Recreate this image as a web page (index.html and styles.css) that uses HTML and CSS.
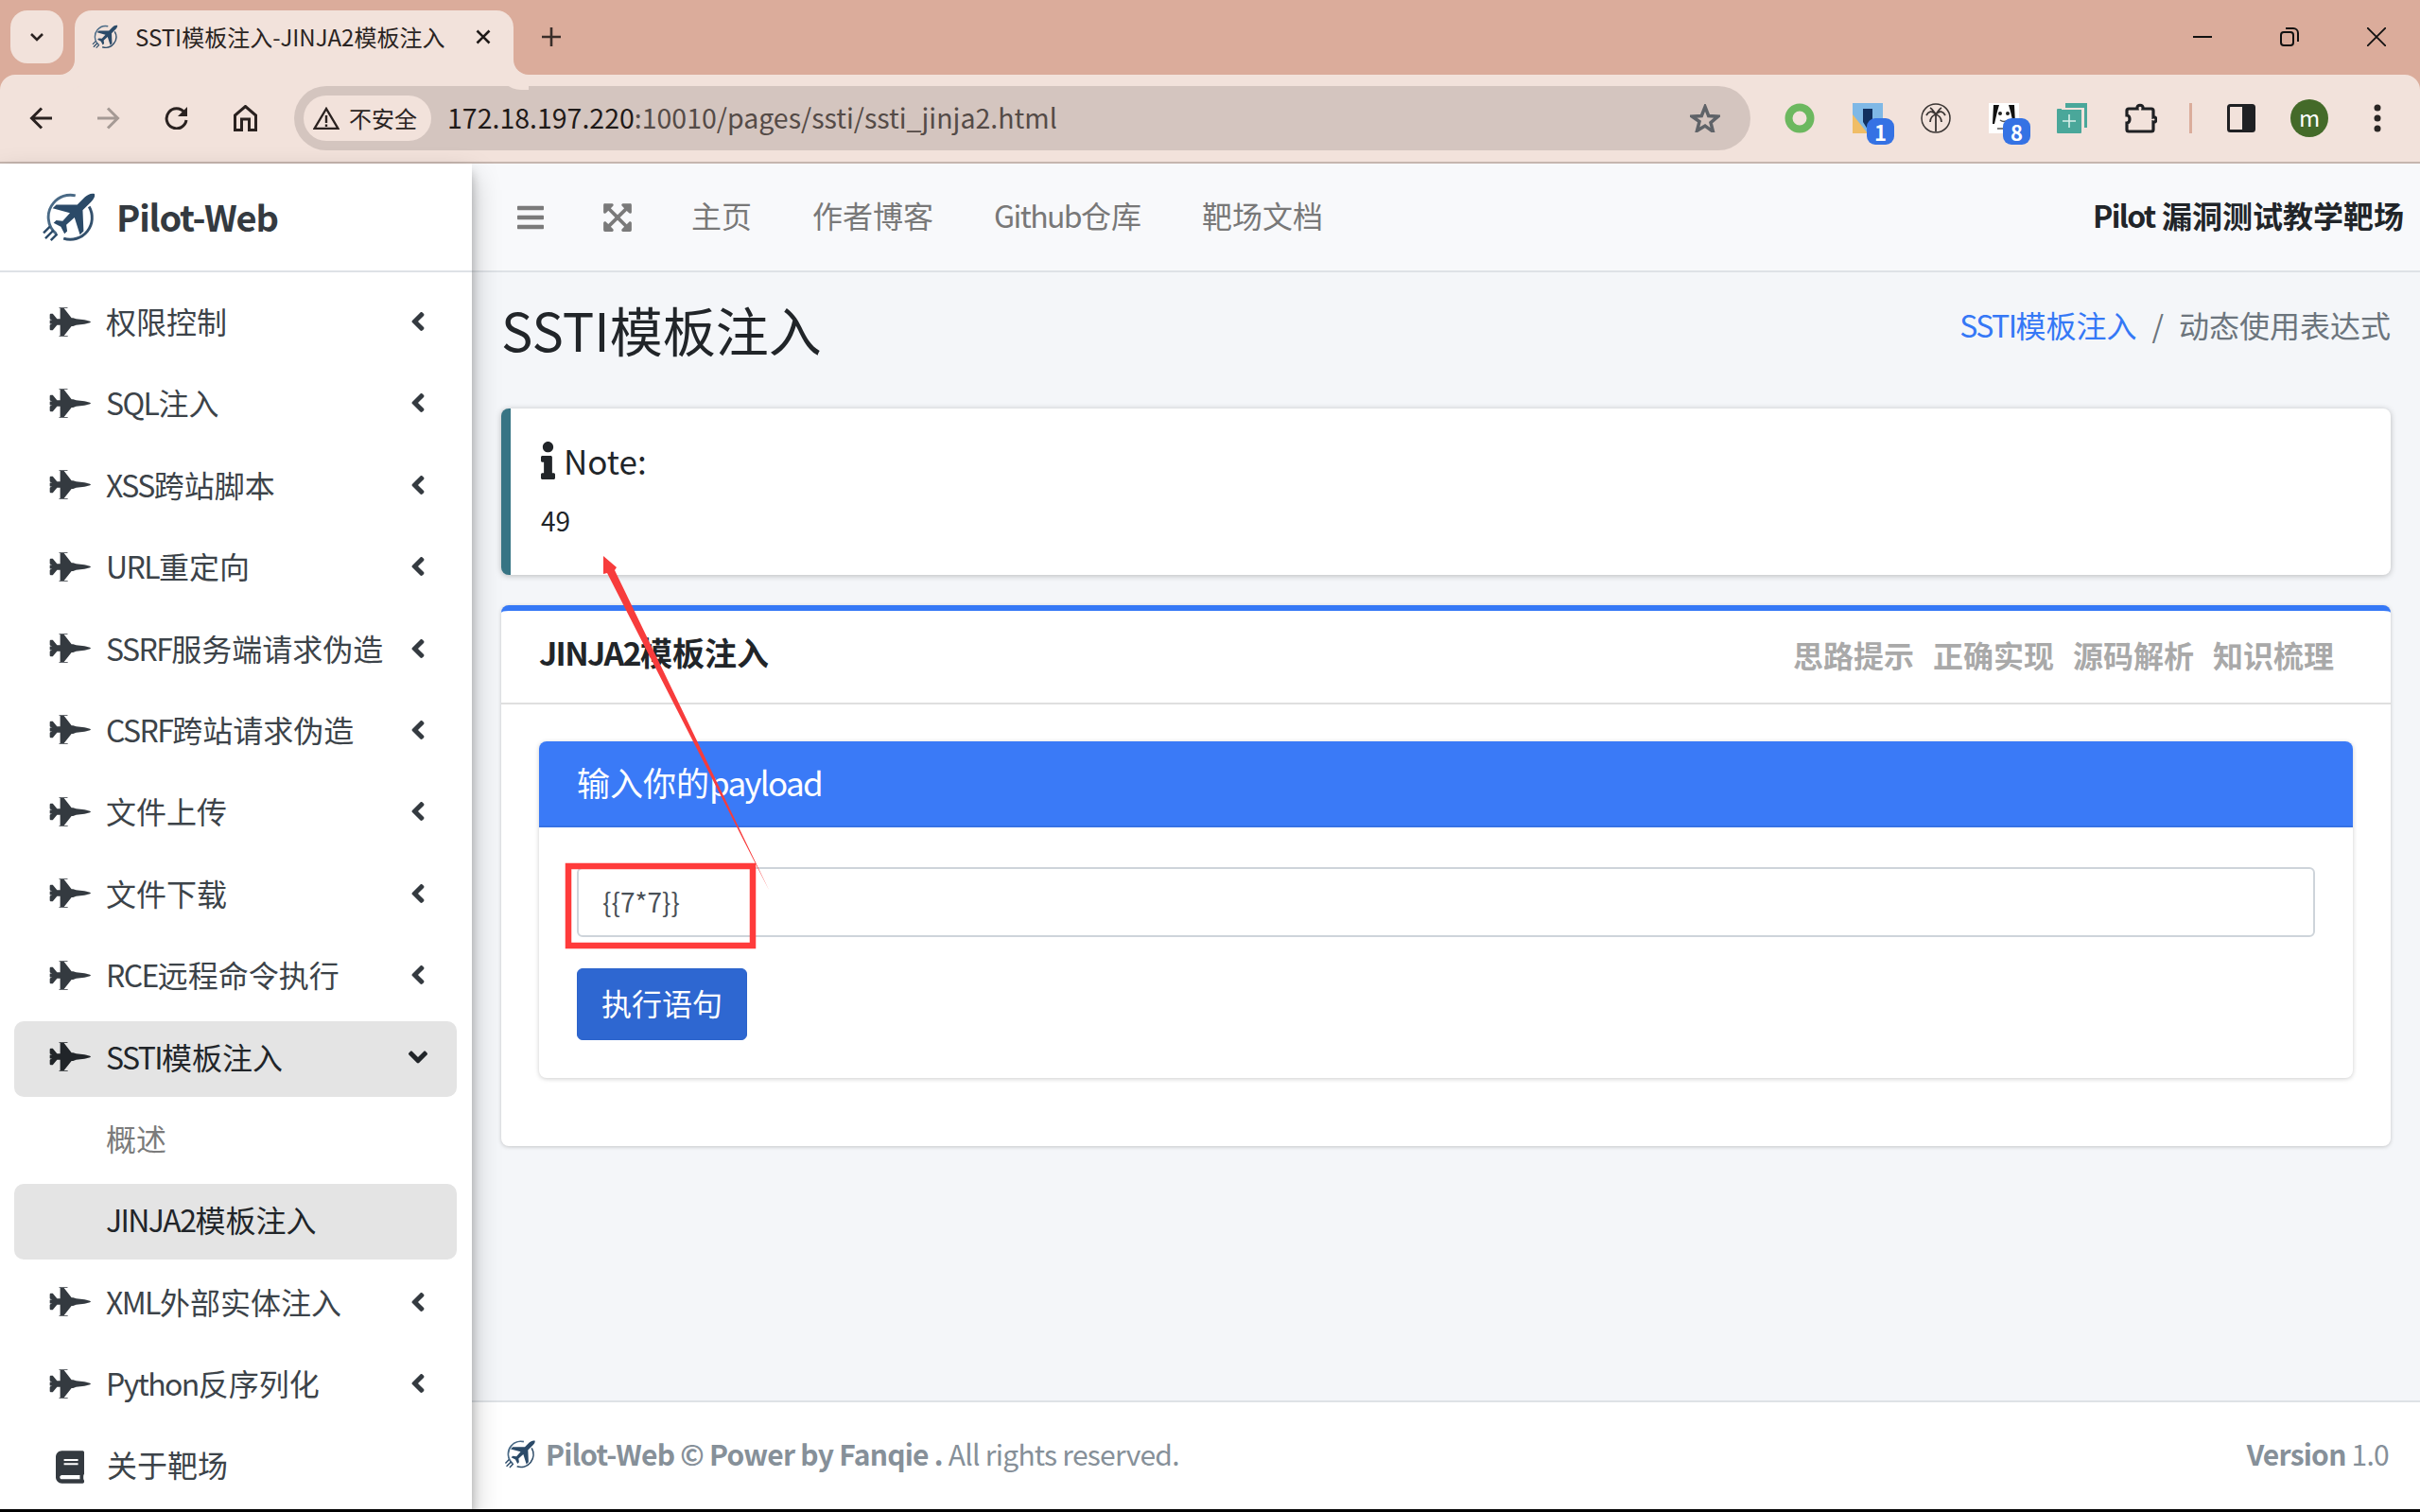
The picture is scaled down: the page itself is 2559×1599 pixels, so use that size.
FILE: index.html
```html
<!DOCTYPE html>
<html lang="zh-CN">
<head>
  <meta charset="utf-8">
  <title>SSTI模板注入-JINJA2模板注入</title>
  <link rel="stylesheet" href="styles.css">
</head>
<body>
  <svg class="sprites" xmlns="http://www.w3.org/2000/svg">
    <symbol id="jet" viewBox="0 0 640 512"><path d="M544 224l-128-16-48-16h-24L227.158 44h39.509C278.333 44 288 41.375 288 38s-9.667-6-21.333-6H152v12h16v164h-48l-66.667-80H18.667L8 138.667V208h8v16h24v2.666l-32 5.334v48l32 5.334V288H16v16H8v69.333L18.667 384h34.667L120 304h48v164h-16v12h114.667c11.667 0 21.333-2.625 21.333-6s-9.667-6-21.333-6h-39.509L344 320h24l48-16 128-16c96-21.333 96-26.583 96-32 0-5.417 0-10.667-96-32z"/></symbol>
    <symbol id="angle" viewBox="0 0 256 512"><path d="M31.7 239l136-136c9.4-9.4 24.6-9.4 33.9 0l22.6 22.6c9.4 9.4 9.4 24.6 0 33.9L127.9 256l96.4 96.4c9.4 9.4 9.4 24.6 0 33.9L201.7 409c-9.4 9.4-24.6 9.4-33.9 0l-136-136c-9.5-9.4-9.5-24.6-.1-34z"/></symbol>
    <symbol id="logo" viewBox="0 0 60 54">
      <path d="M16 45A24 24 0 0 1 13 11 24 24 0 0 1 37 3" fill="none" stroke="#4a6a86" stroke-width="3"/>
      <path d="M52 15A24 24 0 0 1 24 50" fill="none" stroke="#33506c" stroke-width="3"/>
      <path d="M58 1C54 0 50 2 47 5L39 13 16 13 12 17 31 22 23 31 16 30 13 33 21 37 25 45 28 42 27 35 36 27 42 46 46 42 45 19 54 10C57 7 59 4 58 1Z" fill="#2b4a68"/>
      <path d="M9 37L2 44M13 41L4 50M17 45L10 52" fill="none" stroke="#2b4a68" stroke-width="2.5"/>
    </symbol>
  </svg>

  <div class="tabstrip">
    <div class="tab-list">
      <svg width="16" height="11" viewBox="0 0 16 11"><path d="M2 2l6 6 6-6" fill="none" stroke="#2a2220" stroke-width="2.6"/></svg>
    </div>
    <div class="tab">
      <svg class="tab-icon"><use href="#logo"/></svg>
      <span class="tab-title">SSTI模板注入-JINJA2模板注入</span>
      <svg class="tab-close" width="16" height="16" viewBox="0 0 16 16"><path d="M1.5 1.5l13 13M14.5 1.5l-13 13" stroke="#1f1a18" stroke-width="2.6"/></svg>
    </div>
    <svg class="new-tab" width="20" height="20" viewBox="0 0 20 20"><path d="M10 0v20M0 10h20" stroke="#3a2e2a" stroke-width="2.6"/></svg>
    <div class="win-controls">
      <svg width="20" height="20" viewBox="0 0 20 20"><path d="M0 10h20" stroke="#111" stroke-width="2"/></svg>
      <svg width="20" height="20" viewBox="0 0 20 20"><rect x="1" y="5" width="13" height="14" rx="3" fill="none" stroke="#111" stroke-width="2"/><path d="M6 1h8a5 5 0 0 1 5 5v9" fill="none" stroke="#111" stroke-width="2"/></svg>
      <svg width="20" height="20" viewBox="0 0 20 20"><path d="M0 0l20 20M20 0L0 20" stroke="#111" stroke-width="1.8"/></svg>
    </div>
  </div>

  <div class="toolbar">
    <div class="nav-btns">
      <svg width="24" height="24" viewBox="0 0 24 24"><path d="M24 12H3M13 1.500L2.500 12 13 22.500" fill="none" stroke="#2a2220" stroke-width="3"/></svg>
      <svg width="24" height="24" viewBox="0 0 24 24"><path d="M0 12h21M11 1.500L21.500 12 11 22.500" fill="none" stroke="#a59a95" stroke-width="3"/></svg>
      <svg width="25" height="24" viewBox="0 0 25 24"><path d="M21 6A10.500 10.500 0 1 0 23 14" fill="none" stroke="#2a2220" stroke-width="3"/><path d="M24 0v10H14z" fill="#2a2220"/></svg>
      <svg width="25" height="28" viewBox="0 0 25 28"><path d="M1.500 26.500V11L12.500 1.500 23.500 11v15.500h-7V15h-8v11.500z" fill="none" stroke="#2a2220" stroke-width="3"/></svg>
    </div>
    <div class="omnibox">
      <div class="chip">
        <svg width="28" height="24" viewBox="0 0 28 24"><path d="M14 2L1.500 23h25z" fill="none" stroke="#2a2220" stroke-width="2.400"/><path d="M14 9v8M14 18.500v2.500" stroke="#2a2220" stroke-width="2.400"/></svg>
        <span>不安全</span>
      </div>
      <div class="url"><span class="url-host">172.18.197.220</span>:10010/pages/ssti/ssti_jinja2.html</div>
      <svg class="star" width="32" height="30" viewBox="0 0 32 30"><path d="M16 3l3.700 9.500 10 .7-7.700 6.400 2.500 9.700L16 23l-8.500 5.300L10 18.600 2.300 13.200l10-.7z" fill="none" stroke="#5f6368" stroke-width="3.500"/></svg>
    </div>
    <div class="ext-bar">
      <div class="ext"><svg width="32" height="32" viewBox="0 0 32 32"><circle cx="16" cy="16" r="11.500" fill="none" stroke="#6cb85f" stroke-width="8"/></svg></div>
      <div class="ext">
        <svg width="32" height="32" viewBox="0 0 32 32"><rect width="32" height="32" fill="#7fb8e6"/><path d="M0 12l16 20H0z" fill="#f0bd66"/><path d="M11 6h10v22l-5 0-5-8z" fill="#12305f"/></svg>
        <span class="badge">1</span>
      </div>
      <div class="ext"><svg width="32" height="32" viewBox="0 0 32 32"><circle cx="16" cy="16" r="15" fill="none" stroke="#3a3533" stroke-width="1.500"/><path d="M16 30V12M16 12C12 7 8 9 6 13M16 12c4-5 8-3 10 1M16 12C13 8 12 6 10 5M16 12c3-4 4-6 6-7M16 12c-3 1-6 4-6 8M16 12c3 1 6 4 6 8" fill="none" stroke="#3a3533" stroke-width="1.800"/></svg></div>
      <div class="ext">
        <svg width="32" height="32" viewBox="0 0 32 32"><rect width="32" height="32" fill="#fff"/><path d="M5 2h6L9 9 6 22H4zM27 2h-6l2 7 3 13h2z" fill="#111"/><circle cx="12" cy="11" r="2" fill="#222"/><circle cx="20" cy="11" r="2" fill="#222"/><path d="M12 18q4 3 8 0M9 27h14" fill="none" stroke="#555" stroke-width="1.500"/></svg>
        <span class="badge">8</span>
      </div>
      <div class="ext"><svg width="32" height="32" viewBox="0 0 32 32"><path d="M9 0h23v26h-3V5H9z" fill="#4aa79a"/><rect y="6" width="26" height="26" rx="1" fill="#4aa79a"/><path d="M5 5h22v2H5z" fill="#f2e2db"/><path d="M13 12v14M6 19h14" stroke="#d9efe9" stroke-width="1.600"/></svg></div>
      <div class="ext puzzle"><svg width="34" height="32" viewBox="0 0 34 32"><path d="M4 6h9c-1-5 7-5 6 0h9a2 2 0 0 1 2 2v7c4-1 4 6 0 5v8a2 2 0 0 1-2 2H4a2 2 0 0 1-2-2v-7c4 0 4-8 0-8V8a2 2 0 0 1 2-2z" fill="none" stroke="#1f2023" stroke-width="3.200"/></svg></div>
      <div class="ext-sep"></div>
      <div class="ext"><svg width="30" height="30" viewBox="0 0 30 30"><rect x="1.500" y="1.500" width="27" height="27" rx="2" fill="none" stroke="#1f2023" stroke-width="3"/><rect x="16" y="1" width="13" height="28" fill="#1f2023"/></svg></div>
      <div class="avatar">m</div>
      <svg class="menu-dots" width="8" height="30" viewBox="0 0 8 30"><circle cx="4" cy="4" r="3.500" fill="#2a2624"/><circle cx="4" cy="15" r="3.500" fill="#2a2624"/><circle cx="4" cy="26" r="3.500" fill="#2a2624"/></svg>
    </div>
  </div>

  <div class="page">
    <aside class="sidebar">
      <div class="brand">
        <svg class="brand-logo"><use href="#logo"/></svg>
        <span class="brand-name">Pilot-Web</span>
      </div>
      <ul class="side-nav">
        <li class="side-item"><svg class="jet"><use href="#jet"/></svg><div class="side-label">权限控制</div><svg class="angle"><use href="#angle"/></svg></li>
        <li class="side-item"><svg class="jet"><use href="#jet"/></svg><div class="side-label"><span class="en">SQL</span>注入</div><svg class="angle"><use href="#angle"/></svg></li>
        <li class="side-item"><svg class="jet"><use href="#jet"/></svg><div class="side-label"><span class="en">XSS</span>跨站脚本</div><svg class="angle"><use href="#angle"/></svg></li>
        <li class="side-item"><svg class="jet"><use href="#jet"/></svg><div class="side-label"><span class="en">URL</span>重定向</div><svg class="angle"><use href="#angle"/></svg></li>
        <li class="side-item"><svg class="jet"><use href="#jet"/></svg><div class="side-label"><span class="en">SSRF</span>服务端请求伪造</div><svg class="angle"><use href="#angle"/></svg></li>
        <li class="side-item"><svg class="jet"><use href="#jet"/></svg><div class="side-label"><span class="en">CSRF</span>跨站请求伪造</div><svg class="angle"><use href="#angle"/></svg></li>
        <li class="side-item"><svg class="jet"><use href="#jet"/></svg><div class="side-label">文件上传</div><svg class="angle"><use href="#angle"/></svg></li>
        <li class="side-item"><svg class="jet"><use href="#jet"/></svg><div class="side-label">文件下载</div><svg class="angle"><use href="#angle"/></svg></li>
        <li class="side-item"><svg class="jet"><use href="#jet"/></svg><div class="side-label"><span class="en">RCE</span>远程命令执行</div><svg class="angle"><use href="#angle"/></svg></li>
        <li class="side-item open"><svg class="jet"><use href="#jet"/></svg><div class="side-label"><span class="en">SSTI</span>模板注入</div><svg class="angle"><use href="#angle"/></svg></li>
        <li class="side-item sub muted"><div class="side-label">概述</div></li>
        <li class="side-item sub current"><div class="side-label"><span class="en">JINJA2</span>模板注入</div></li>
        <li class="side-item"><svg class="jet"><use href="#jet"/></svg><div class="side-label"><span class="en">XML</span>外部实体注入</div><svg class="angle"><use href="#angle"/></svg></li>
        <li class="side-item"><svg class="jet"><use href="#jet"/></svg><div class="side-label"><span class="en">Python</span>反序列化</div><svg class="angle"><use href="#angle"/></svg></li>
        <li class="side-item"><svg class="book" viewBox="0 0 448 512"><path d="M448 360V24c0-13.300-10.700-24-24-24H96C43 0 0 43 0 96v320c0 53 43 96 96 96h328c13.300 0 24-10.700 24-24v-16c0-7.500-3.500-14.300-8.900-18.700-4.200-15.400-4.200-59.300 0-74.700 5.400-4.300 8.900-11.100 8.900-18.600zM128 134c0-3.300 2.700-6 6-6h212c3.300 0 6 2.700 6 6v20c0 3.300-2.700 6-6 6H134c-3.300 0-6-2.700-6-6v-20zm0 64c0-3.300 2.700-6 6-6h212c3.300 0 6 2.700 6 6v20c0 3.300-2.700 6-6 6H134c-3.300 0-6-2.700-6-6v-20zm253.400 250H96c-17.700 0-32-14.300-32-32 0-17.600 14.400-32 32-32h285.400c-1.900 17.100-1.900 46.900 0 64z"/></svg><div class="side-label">关于靶场</div></li>
      </ul>
    </aside>

    <div class="main">
      <nav class="topbar">
        <svg class="top-icon bars" viewBox="0 0 448 512"><path d="M16 132h416c8.837 0 16-7.163 16-16V76c0-8.837-7.163-16-16-16H16C7.163 60 0 67.163 0 76v40c0 8.837 7.163 16 16 16zm0 160h416c8.837 0 16-7.163 16-16v-40c0-8.837-7.163-16-16-16H16c-8.837 0-16 7.163-16 16v40c0 8.837 7.163 16 16 16zm0 160h416c8.837 0 16-7.163 16-16v-40c0-8.837-7.163-16-16-16H16c-8.837 0-16 7.163-16 16v40c0 8.837 7.163 16 16 16z"/></svg>
        <svg class="top-icon expand" viewBox="0 0 448 512"><path d="M448 344v112a23.940 23.940 0 0 1-24 24H312c-21.390 0-32.090-25.900-17-41l36.200-36.200L224 295.600 116.770 402.900 153 439c15.090 15.100 4.390 41-17 41H24a23.940 23.940 0 0 1-24-24V344c0-21.400 25.890-32.100 41-17l36.190 36.200L184.460 256 77.180 148.700 41 185c-15.100 15.100-41 4.400-41-17V56a23.940 23.940 0 0 1 24-24h112c21.390 0 32.090 25.900 17 41l-36.200 36.200L224 216.400l107.230-107.300L295 73c-15.090-15.100-4.390-41 17-41h112a23.940 23.940 0 0 1 24 24v112c0 21.400-25.890 32.100-41 17l-36.190-36.200L263.540 256l107.280 107.300L407 327.100c15.100-15.200 41-4.500 41 16.900z"/></svg>
        <a class="top-link">主页</a>
        <a class="top-link">作者博客</a>
        <a class="top-link"><span class="en">Github</span>仓库</a>
        <a class="top-link">靶场文档</a>
        <span class="top-title"><span class="en">Pilot</span> 漏洞测试教学靶场</span>
      </nav>

      <div class="content">
        <div class="content-head">
          <h1>SSTI模板注入</h1>
          <div class="crumbs"><a><span class="en">SSTI</span>模板注入</a><i>/</i><span>动态使用表达式</span></div>
        </div>

        <div class="note">
          <h5><svg class="info" viewBox="0 0 192 512"><path d="M20 424.229h20V279.771H20c-11.046 0-20-8.954-20-20V212c0-11.046 8.954-20 20-20h112c11.046 0 20 8.954 20 20v212.229h20c11.046 0 20 8.954 20 20V492c0 11.046-8.954 20-20 20H20c-11.046 0-20-8.954-20-20v-47.771c0-11.046 8.954-20 20-20zM96 0C56.235 0 24 32.235 24 72s32.235 72 72 72 72-32.235 72-72S135.764 0 96 0z"/></svg>Note:</h5>
          <p>49</p>
        </div>

        <div class="card">
          <div class="card-head">
            <h3><span class="en">JINJA2</span>模板注入</h3>
            <div class="card-tabs">
              <a>思路提示</a>
              <a>正确实现</a>
              <a>源码解析</a>
              <a>知识梳理</a>
            </div>
          </div>
          <div class="card-body">
            <div class="form-card">
              <div class="form-head"><div>输入你的<span class="en">payload</span></div></div>
              <div class="form-body">
                <div class="input">{{7*7}}</div>
                <button class="btn">执行语句</button>
              </div>
            </div>
          </div>
        </div>
      </div>

      <footer class="footer">
        <div class="foot-left">
          <svg class="foot-logo"><use href="#logo"/></svg>
          <div><b>Pilot-Web © Power by Fanqie .</b> All rights reserved.</div>
        </div>
        <div><b>Version</b> 1.0</div>
      </footer>
    </div>
  </div>
  <div class="bottom-edge"></div>

  <!-- red marks drawn over the screenshot -->
  <svg class="marks" width="2559" height="1599" viewBox="0 0 2559 1599">
    <rect x="601" y="916" width="195" height="84" fill="none" stroke="#ff3b3b" stroke-width="6.500"/>
    <path d="M638 588L652 600 650 603 813 941 642 606 638 607z" fill="#f73c3c"/>
  </svg>
</body>
</html>
```

FILE: styles.css
```css
* {
  box-sizing: border-box;
}

html, body {
  margin: 0;
  height: 1599px;
  overflow: hidden;
}

body {
  position: relative;
  display: flex;
  flex-direction: column;
  font-family: "Noto Sans CJK SC", "Noto Sans", sans-serif;
  font-size: 32px;
  line-height: 1.5;
  color: #212529;
  background: #dbac9b;
}

.sprites {
  display: none;
}

svg {
  display: block;
  flex: none;
}

/* latin runs sit tighter next to the CJK text */
.en {
  letter-spacing: -.05em;
}

/* browser chrome */

.tabstrip {
  display: flex;
  height: 79px;
  padding: 11px 0 0 11px;
  flex: none;
}

.tab-list {
  width: 56px;
  height: 56px;
  display: flex;
  align-items: center;
  justify-content: center;
  background: #f2e2db;
  border-radius: 18px;
}

.tab {
  position: relative;
  width: 464px;
  height: 68px;
  margin-left: 12px;
  padding: 0 24px 12px 18px;
  display: flex;
  align-items: center;
  background: #f2e2db;
  border-radius: 18px 18px 0 0;
}

.tab::before,
.tab::after {
  content: "";
  position: absolute;
  bottom: 0;
  width: 16px;
  height: 16px;
  background: #dbac9b;
}

.tab::before {
  left: -16px;
  border-bottom-right-radius: 16px;
  box-shadow: 8px 8px 0 8px #f2e2db;
}

.tab::after {
  right: -16px;
  border-bottom-left-radius: 16px;
  box-shadow: -8px 8px 0 8px #f2e2db;
}

.tab-icon {
  width: 28px;
  height: 26px;
}

.tab-title {
  margin-left: 18px;
  font-size: 24px;
  color: #2a2422;
  white-space: nowrap;
}

.tab-close {
  margin-left: auto;
}

.new-tab {
  margin: 18px 0 0 30px;
}

.win-controls {
  margin-left: auto;
  padding: 18px 36px 0 0;
  display: flex;
  gap: 72px;
}

.toolbar {
  height: 94px;
  flex: none;
  display: flex;
  align-items: center;
  padding-left: 31px;
  background: #f2e2db;
  border-bottom: 2px solid #c6b6af;
  border-radius: 16px 16px 0 0;
}

.nav-btns {
  display: flex;
  align-items: center;
  gap: 47.5px;
}

.omnibox {
  width: 1540px;
  height: 68px;
  margin-left: 39.5px;
  padding: 0 32px 0 10px;
  display: flex;
  align-items: center;
  background: #d4c5bf;
  border-radius: 34px;
}

.chip {
  width: 135px;
  height: 48px;
  padding-left: 10px;
  display: flex;
  align-items: center;
  gap: 10px;
  background: #f2e2db;
  border-radius: 24px;
  font-size: 24px;
  color: #2a2422;
}

.url {
  margin: -2px 0 0 17px;
  font-size: 28.5px;
  color: #544b47;
  white-space: nowrap;
}

.url-host {
  color: #1f1a18;
}

.star {
  margin-left: auto;
}

.ext-bar {
  flex: 1;
  display: flex;
  align-items: center;
  padding-left: 36px;
}

.ext {
  position: relative;
  width: 32px;
  margin-right: 40px;
}

.puzzle {
  width: 34px;
  margin-right: 34px;
}

.badge {
  position: absolute;
  left: 15px;
  top: 16px;
  width: 29px;
  height: 28px;
  background: #3572e4;
  border-radius: 9px;
  color: #fff;
  font-size: 22px;
  font-weight: 700;
  line-height: 28px;
  text-align: center;
}

.ext-sep {
  width: 3px;
  height: 32px;
  margin-right: 37px;
  background: #dbac9b;
}

.avatar {
  width: 40px;
  height: 40px;
  margin-left: -5px;
  background: #446a29;
  border-radius: 50%;
  color: #fff;
  font-size: 24px;
  line-height: 38px;
  text-align: center;
}

.menu-dots {
  margin-left: 48px;
}

/* page */

.page {
  flex: 1;
  min-height: 0;
  display: flex;
  background: #f4f6f9;
}

.sidebar {
  position: relative;
  z-index: 2;
  width: 499px;
  flex: none;
  background: #fff;
  box-shadow: 0 14px 28px rgba(0, 0, 0, .25), 0 10px 10px rgba(0, 0, 0, .22);
}

.brand {
  height: 115px;
  padding-left: 44px;
  display: flex;
  align-items: center;
  gap: 21px;
  border-bottom: 2px solid #dee2e6;
}

.brand-logo {
  width: 58px;
  height: 52px;
}

.brand-name {
  margin-top: -3px;
  font-size: 38px;
  font-weight: 700;
  letter-spacing: -.03em;
  color: #343a40;
}

.side-nav {
  list-style: none;
  margin: 0;
  padding: 14px 16px 0 15px;
}

.side-item {
  height: 80px;
  margin-bottom: 6.4px;
  padding: 0 33px 0 37px;
  display: flex;
  align-items: center;
  border-radius: 10px;
  color: #3c4349;
}

.side-label {
  margin-bottom: 6px;
  white-space: nowrap;
}

.jet {
  width: 44px;
  height: 35px;
  margin-right: 16px;
  margin-bottom: 4px;
  fill: #343a40;
}

.angle {
  width: 16px;
  height: 32px;
  margin-left: auto;
  margin-bottom: 4px;
  fill: #343a40;
}

.book {
  width: 30px;
  height: 35px;
  margin: 0 24px 0 7px;
  fill: #343a40;
}

.open {
  background: #e4e4e4;
  color: #212529;
}

.open .jet,
.open .angle {
  fill: #212529;
}

.open .angle {
  transform: rotate(-90deg);
}

.sub {
  padding-left: 97px;
}

.muted {
  color: #7b7b7b;
}

.current {
  background: #e4e4e4;
  color: #212529;
}

.main {
  flex: 1;
  min-width: 0;
  display: flex;
  flex-direction: column;
}

.topbar {
  height: 115px;
  flex: none;
  padding: 0 17px 0 48px;
  display: flex;
  align-items: center;
  background: #f8f9fb;
  border-bottom: 2px solid #dee2e6;
}

.top-icon {
  fill: #7a7a7a;
}

.bars {
  width: 28px;
  height: 32px;
}

.expand {
  width: 30px;
  height: 34px;
  margin: 0 31px 0 63px;
}

.top-link {
  margin-bottom: 6px;
  padding: 0 32px;
  color: #787878;
}

.top-title {
  margin: 0 0 6px auto;
  font-weight: 700;
}

.content {
  flex: 1;
  padding: 0 31px;
}

.content-head {
  height: 144px;
  padding-bottom: 24px;
  display: flex;
  justify-content: space-between;
  align-items: center;
}

.content-head h1 {
  margin: 0;
  font-size: 56px;
  font-weight: 400;
  line-height: 1.2;
}

.crumbs {
  display: flex;
  margin-top: -10px;
  color: #6c757d;
}

.crumbs a {
  color: #3578f6;
}

.crumbs i {
  font-style: normal;
  margin: 0 16px;
}

.note {
  height: 176px;
  padding: 28px 32px;
  background: #fff;
  border-left: 10px solid #377484;
  border-radius: 8px;
  box-shadow: 0 1px 6px rgba(0, 0, 0, .25);
}

.note h5 {
  margin: 0;
  display: flex;
  align-items: center;
  gap: 9px;
  font-size: 35px;
  font-weight: 400;
  line-height: 54px;
}

.info {
  width: 15px;
  height: 40px;
  fill: #212529;
}

.note p {
  margin: 15px 0 0;
  font-size: 28px;
  line-height: 42px;
}

.card {
  height: 572px;
  margin-top: 32px;
  background: #fff;
  border-top: 6px solid #3578f6;
  border-radius: 8px;
  box-shadow: 0 1px 4px rgba(0, 0, 0, .2);
}

.card-head {
  height: 99px;
  padding: 0 60px 10px 40px;
  display: flex;
  justify-content: space-between;
  align-items: center;
  border-bottom: 2px solid #dfdfdf;
}

.card-head h3 {
  margin: 0;
  font-size: 34px;
  font-weight: 700;
}

.card-tabs {
  display: flex;
  gap: 20px;
  margin-top: 4px;
  font-weight: 700;
  color: #a9a9a9;
}

.card-body {
  padding: 39px 40px;
}

.form-card {
  height: 356px;
  background: #fff;
  border-radius: 8px;
  box-shadow: 0 1px 5px rgba(0, 0, 0, .2);
}

.form-head {
  height: 91px;
  padding: 0 0 3px 40px;
  display: flex;
  align-items: center;
  background: #3a7af7;
  border-bottom: 2px solid #3571e4;
  border-radius: 8px 8px 0 0;
  font-size: 35px;
  color: #fff;
}

.form-body {
  padding: 42px 40px 0;
}

.input {
  height: 74px;
  padding: 0 0 2px 25px;
  display: flex;
  align-items: center;
  border: 2px solid #ced4da;
  border-radius: 6px;
  font-size: 28px;
  color: #495057;
}

.btn {
  display: block;
  height: 76px;
  width: 180px;
  margin-top: 33px;
  padding: 0 0 4px;
  background: #2e67d1;
  border: 1px solid #2c63ca;
  border-radius: 6px;
  color: #fff;
  font: inherit;
}

.footer {
  height: 115px;
  flex: none;
  padding: 0 33px 4px 34px;
  display: flex;
  justify-content: space-between;
  align-items: center;
  background: #fff;
  border-top: 2px solid #dee2e6;
  font-size: 30px;
  letter-spacing: -.025em;
  color: #869099;
}

.foot-left {
  display: flex;
  align-items: center;
}

.foot-logo {
  width: 34px;
  height: 30px;
  margin-right: 10px;
}

.bottom-edge {
  height: 3px;
  flex: none;
  background: #000;
}

.marks {
  position: absolute;
  left: 0;
  top: 0;
  z-index: 5;
  pointer-events: none;
}
```
